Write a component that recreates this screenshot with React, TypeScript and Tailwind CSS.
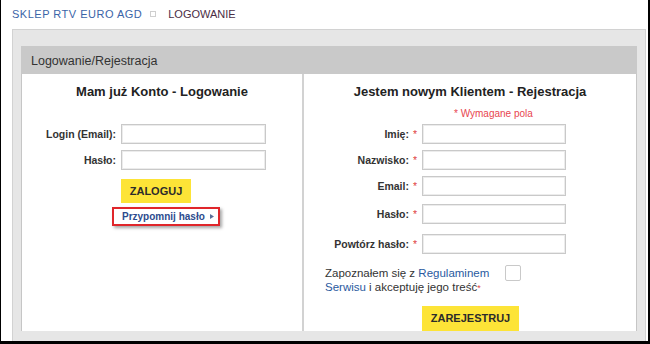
const font = { fontFamily: '"Liberation Sans", Arial, sans-serif' };

function Field({ label, labelWidth, inputWidth, required, className = '' }: { label: string; labelWidth: string; inputWidth: string; required?: boolean; className?: string }) {
  return (
    <div className={`flex items-center ${className}`}>
      <div className={`${labelWidth} text-right text-[10.5px] font-bold leading-[20px] text-[#333]`}>
        {label}
        {required && <span className="ml-[4px] font-normal text-[#e0443f]">*</span>}
      </div>
      <input className={`ml-[5px] h-[20px] ${inputWidth} border border-[#c9c9c9] bg-white shadow-[inset_0_0_0_1px_#ececec] outline-none`} />
    </div>
  );
}

function LoginColumn() {
  return (
    <div className="w-[282px] shrink-0 border-r-2 border-[#d2d2d2] pb-[40px]">
      <h2 className="mt-[10px] text-center text-[13px] font-bold leading-[16px] text-[#222]">Mam już Konto - Logowanie</h2>
      <Field className="mt-[24px]" label="Login (Email):" labelWidth="w-[94px]" inputWidth="w-[145px]" />
      <Field className="mt-[6px]" label="Hasło:" labelWidth="w-[94px]" inputWidth="w-[145px]" />
      <button className="ml-[99px] mt-[9px] flex h-[24px] w-[70px] items-center justify-center bg-[#fde437] text-[11px] font-bold text-[#2b2b2b]">
        ZALOGUJ
      </button>
      <div className="ml-[90px] mt-[4px] flex h-[19px] w-[108px] items-center border-2 border-[#e0262b] pl-[8px] shadow-[2px_2px_3px_rgba(0,0,0,0.35)]">
        <span className="text-[10px] font-bold leading-[12px] text-[#2c4b8e]">Przypomnij hasło</span>
        <svg className="ml-[5px]" width="4" height="5" viewBox="0 0 4 5">
          <path d="M0 0 L4 2.5 L0 5 Z" fill="#5a6f99" />
        </svg>
      </div>
    </div>
  );
}

function RegisterColumn() {
  return (
    <div className="flex-1">
      <h2 className="mt-[10px] text-center text-[13px] font-bold leading-[16px] text-[#222]">Jestem nowym Klientem - Rejestracja</h2>
      <div className="ml-[150px] mt-[8px] text-[10px] leading-[12px] text-[#e8454f]">* Wymagane pola</div>
      <Field className="mt-[4px]" label="Imię:" required labelWidth="w-[113px]" inputWidth="w-[144px]" />
      <Field className="mt-[6px]" label="Nazwisko:" required labelWidth="w-[113px]" inputWidth="w-[144px]" />
      <Field className="mt-[6px]" label="Email:" required labelWidth="w-[113px]" inputWidth="w-[144px]" />
      <Field className="mt-[8px]" label="Hasło:" required labelWidth="w-[113px]" inputWidth="w-[144px]" />
      <Field className="mt-[10px]" label="Powtórz hasło:" required labelWidth="w-[113px]" inputWidth="w-[144px]" />
      <div className="mt-[11px] flex items-start">
        <div className="ml-[21px] w-[172px] pt-[1px] text-[11.5px] leading-[14px] text-[#333]">
          <div>
            Zapoznałem się z <span className="text-[#2a5aa0]">Regulaminem</span>
          </div>
          <div>
            <span className="text-[#2a5aa0]">Serwisu</span> i akceptuję jego treść
            <span className="text-[9px] text-[#e0443f]">*</span>
          </div>
        </div>
        <div className="ml-[8px] h-[16px] w-[16px] rounded-[2px] border border-[#c9c9c9] bg-white" />
      </div>
      <button className="ml-[118px] mt-[11px] flex h-[25px] w-[97px] items-center justify-center bg-[#fde437] text-[11px] font-bold text-[#2b2b2b]">
        ZAREJESTRUJ
      </button>
    </div>
  );
}

export default function App() {
  return (
    <div style={font} className="h-[344px] w-[650px] overflow-hidden border-b-[3px] border-l border-r-2 border-black bg-white">
      <div className="flex items-center pl-[11px] pt-[7px] text-[11px] leading-[14px]">
        <span className="tracking-[0.5px] text-[#3b64a8]">SKLEP RTV EURO AGD</span>
        <span className="ml-[8px] h-[6px] w-[6px] border border-[#cfcfcf]" />
        <span className="ml-[12px] text-[#4b2d45]">LOGOWANIE</span>
      </div>
      <div className="ml-[11px] mt-[8px] h-[400px] w-[634px] border-l border-r border-t border-[#d2d2d2] bg-[#e6e6e6] px-[8px] pt-[16px]">
        <div className="flex h-[28px] items-center bg-[#c9c9c9] pl-[10px] pt-[2px] text-[12.5px] text-[#333]">Logowanie/Rejestracja</div>
        <div className="flex border-x border-[#c6c6c6] bg-white">
          <LoginColumn />
          <RegisterColumn />
        </div>
      </div>
    </div>
  );
}
